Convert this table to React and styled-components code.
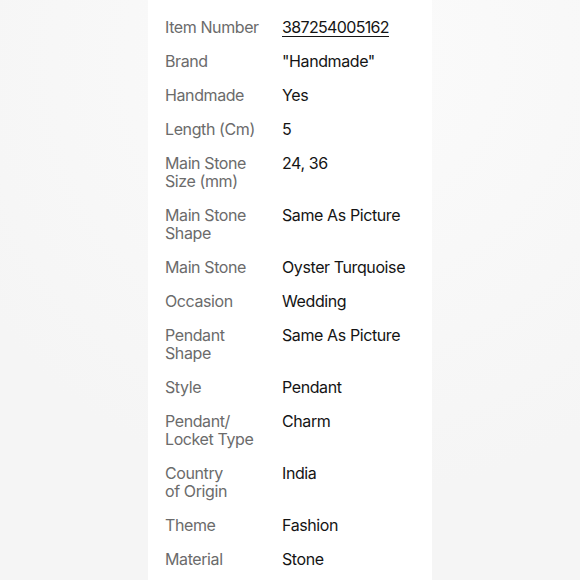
import React from 'react';
import styled, { createGlobalStyle } from 'styled-components';

const GlobalStyle = createGlobalStyle`
  html, body {
    margin: 0;
    padding: 0;
    background: #f6f6f6;
  }
  body {
    font-family: Inter, "Noto Sans", sans-serif;
  }
`;

const Page = styled.div`
  width: 580px;
  height: 580px;
  overflow: hidden;
  display: flex;
  justify-content: center;
  background: radial-gradient(circle at 60% 10%, #fbfbfb 0%, #f5f5f5 70%);
`;

const Panel = styled.div`
  width: 284px;
  background: #fff;
  padding: 10px 0 0 17px;
  box-sizing: border-box;
`;

const Row = styled.div`
  display: grid;
  grid-template-columns: 117px 1fr;
  padding: 8px 0;
  font-size: 16px;
  line-height: 18px;
  letter-spacing: -0.4px;
`;

const Label = styled.div`
  color: #6b6b6b;
  white-space: pre-line;
`;

const Value = styled.div`
  color: #141414;
  text-decoration: ${(p) => (p.$link ? 'underline' : 'none')};
  text-underline-offset: 3px;
  text-decoration-thickness: 1px;
  letter-spacing: ${(p) => (p.$link ? '-0.65px' : 'inherit')};
`;

const specs = [
  ['Item Number', '387254005162', true],
  ['Brand', '"Handmade"'],
  ['Handmade', 'Yes'],
  ['Length (Cm)', '5'],
  ['Main Stone\nSize (mm)', '24, 36'],
  ['Main Stone\nShape', 'Same As Picture'],
  ['Main Stone', 'Oyster Turquoise'],
  ['Occasion', 'Wedding'],
  ['Pendant\nShape', 'Same As Picture'],
  ['Style', 'Pendant'],
  ['Pendant/\nLocket Type', 'Charm'],
  ['Country\nof Origin', 'India'],
  ['Theme', 'Fashion'],
  ['Material', 'Stone'],
];

const App = () => {
  return (
    <>
      <GlobalStyle />
      <Page>
        <Panel>
          {specs.map(([label, value, link]) => (
            <Row key={label}>
              <Label>{label}</Label>
              <Value $link={link}>{value}</Value>
            </Row>
          ))}
        </Panel>
      </Page>
    </>
  );
};

export default App;
